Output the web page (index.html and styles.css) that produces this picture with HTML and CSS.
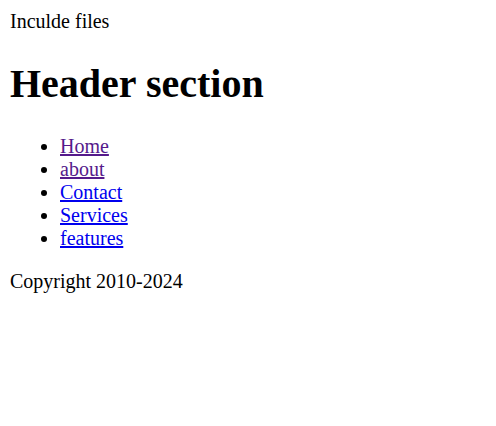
FILE: index.html
```html
<!DOCTYPE html>
<html lang="en">
<head>
<meta charset="utf-8">
<title>Include files</title>
<link rel="stylesheet" href="styles.css">
</head>
<body>
<div class="top">Inculde files</div>
<header>
<h1 class="title">Header section</h1>
<nav>
<ul class="menu">
<li><a class="link visited" href="#home">Home</a></li>
<li><a class="link visited" href="#about">about</a></li>
<li><a class="link" href="#contact">Contact</a></li>
<li><a class="link" href="#services">Services</a></li>
<li><a class="link" href="#features">features</a></li>
</ul>
</nav>
</header>
<footer class="foot">Copyright 2010-2024</footer>
</body>
</html>
```
FILE: styles.css
```css
html { background: #fff; }
body {
  margin: 10px;
  font-family: "Liberation Serif", "Times New Roman", serif;
  font-size: 20px;
  color: #000;
}
.title {
  font-size: 40px;
  font-weight: bold;
  margin: 26.8px 0 27.8px;
}
.menu {
  margin: 20px 0;
  padding-left: 50px;
  list-style: disc;
}
.link { color: #0000ee; text-decoration: underline; }
.link.visited { color: #551a8b; }
.foot { margin: 20px 0; }
```
